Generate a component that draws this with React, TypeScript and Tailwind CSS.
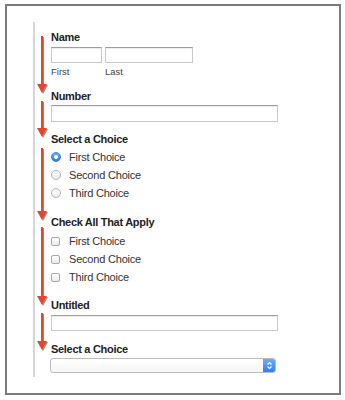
import React from 'react'

const arrows = [
  [14, 71],
  [79, 115],
  [126, 198],
  [205, 283],
  [291, 328],
]

function Arrows() {
  return (
    <svg className="absolute left-0 top-0" width="20" height="360" viewBox="0 0 20 360">
      <defs>
        <filter id="arrowShadow" x="-50%" y="-10%" width="200%" height="130%">
          <feDropShadow dx="1" dy="1" stdDeviation="0.6" floodColor="#000" floodOpacity="0.45" />
        </filter>
      </defs>
      <g filter="url(#arrowShadow)" fill="#e2472f">
        {arrows.map(([from, tip]) => (
          <g key={from}>
            <rect x="6" y={from} width="2" height={tip - from - 8} />
            <polygon points={`2,${tip - 9} 12,${tip - 9} 7,${tip}`} />
          </g>
        ))}
      </g>
    </svg>
  )
}

function Label({ children }: { children: React.ReactNode }) {
  return <div className="text-[11px] leading-[14px] font-bold text-[#222] tracking-[-0.3px]">{children}</div>
}

function TextBox({ width, height }: { width: string; height: string }) {
  return (
    <input
      type="text"
      readOnly
      className={`${width} ${height} block bg-white border border-[#c9c9c9] border-t-[#9e9e9e] shadow-[inset_0_1px_1px_rgba(0,0,0,0.08)] outline-none`}
    />
  )
}

function Radio({ checked, label }: { checked?: boolean; label: string }) {
  return (
    <div className="h-[18px] flex items-center">
      {checked ? (
        <div className="w-[10px] h-[10px] rounded-full bg-gradient-to-b from-[#6aaaf6] to-[#2a7be6] border border-[#3b7fd9] flex items-center justify-center">
          <div className="w-[4px] h-[4px] rounded-full bg-white" />
        </div>
      ) : (
        <div className="w-[10px] h-[10px] rounded-full bg-gradient-to-b from-[#fdfdfd] to-[#ececec] border border-[#b3b3b3]" />
      )}
      <span className="ml-[8px] text-[11px] text-[#333] tracking-[-0.2px]">{label}</span>
    </div>
  )
}

function Checkbox({ label }: { label: string }) {
  return (
    <div className="h-[18px] flex items-center">
      <div className="w-[9px] h-[9px] rounded-[2px] bg-gradient-to-b from-[#fdfdfd] to-[#ececec] border border-[#a9a9a9]" />
      <span className="ml-[9px] text-[11px] text-[#333] tracking-[-0.2px]">{label}</span>
    </div>
  )
}

function SelectBox() {
  return (
    <div className="w-[226px] h-[15px] -ml-[1px] flex rounded-[3px] border border-[#bdbdbd] bg-gradient-to-b from-white to-[#f6f6f6] overflow-hidden">
      <div className="flex-1" />
      <div className="w-[13px] -my-[1px] -mr-[1px] rounded-r-[3px] bg-gradient-to-b from-[#71affa] to-[#2c7ef0] flex items-center justify-center">
        <svg width="7" height="11" viewBox="0 0 7 11">
          <path d="M1.5 4.5 L3.5 2.5 L5.5 4.5 M1.5 6.5 L3.5 8.5 L5.5 6.5" stroke="#fff" strokeWidth="1.2" fill="none" />
        </svg>
      </div>
    </div>
  )
}

function App() {
  return (
    <div className="min-h-[400px] bg-white pt-[4px] pl-[5px] font-['Liberation_Sans',Arial,sans-serif]">
      <div className="w-[336px] h-[391px] border-2 border-[#7b7b7b] pt-[16px] pl-[26px]">
        <div className="relative w-[260px] border-l-2 border-[#d6d6d6] pl-[16px] pt-[8px] pb-[4px]">
          <Arrows />

          <Label>Name</Label>
          <div className="mt-[3px] flex gap-[3px]">
            <TextBox width="w-[51px]" height="h-[16px]" />
            <TextBox width="w-[88px]" height="h-[16px]" />
          </div>
          <div className="mt-[3px] flex text-[9.5px] leading-[12px] text-[#444]">
            <span className="w-[54px]">First</span>
            <span>Last</span>
          </div>

          <div className="mt-[11px]">
            <Label>Number</Label>
          </div>
          <div className="mt-[2px]">
            <TextBox width="w-[227px]" height="h-[17px]" />
          </div>

          <div className="mt-[10px]">
            <Label>Select a Choice</Label>
          </div>
          <div className="mt-[2px]">
            <Radio checked label="First Choice" />
            <Radio label="Second Choice" />
            <Radio label="Third Choice" />
          </div>

          <div className="mt-[13px]">
            <Label>Check All That Apply</Label>
          </div>
          <div className="mt-[3px]">
            <Checkbox label="First Choice" />
            <Checkbox label="Second Choice" />
            <Checkbox label="Third Choice" />
          </div>

          <div className="mt-[12px]">
            <Label>Untitled</Label>
          </div>
          <div className="mt-[3px]">
            <TextBox width="w-[227px]" height="h-[16px]" />
          </div>

          <div className="mt-[11px]">
            <Label>Select a Choice</Label>
          </div>
          <div className="mt-[2px]">
            <SelectBox />
          </div>
        </div>
      </div>
    </div>
  )
}

export default App
